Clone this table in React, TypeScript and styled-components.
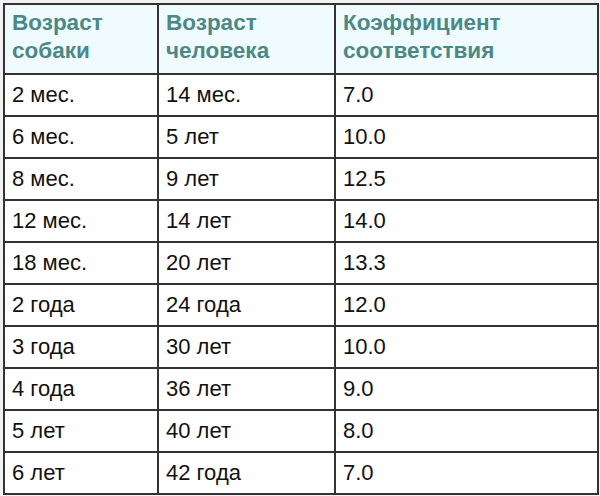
import React from "react";
import styled, { createGlobalStyle } from "styled-components";

const Global = createGlobalStyle`
  html, body { margin: 0; padding: 0; background: #f2f2f2; }
  body { font-family: "Liberation Sans", Arial, sans-serif; }
`;

const Page = styled.div`
  width: 600px;
  height: 496px;
  padding: 3px 3px 0 3px;
  box-sizing: border-box;
  background: #f2f2f2;
`;

const Table = styled.table`
  border-collapse: collapse;
  width: 594px;
  table-layout: fixed;
  background: #ffffff;
  border: 2px solid #333333;
`;

const Col = styled.col<{ $w: number }>`
  width: ${(p) => p.$w}px;
`;

const HeadCell = styled.th`
  background: #f0fbfe;
  color: #4b8886;
  font-weight: bold;
  font-size: 22.5px;
  line-height: 28px;
  text-align: left;
  vertical-align: middle;
  padding: 2px 7px 6px 7px;
  height: 70px;
  box-sizing: border-box;
  border: 2px solid #333333;
`;

const Cell = styled.td`
  color: #111111;
  font-size: 22px;
  text-align: left;
  vertical-align: middle;
  padding: 0 7px;
  height: 42px;
  box-sizing: border-box;
  border: 2px solid #333333;
`;

const rows: [string, string, string][] = [
  ["2 мес.", "14 мес.", "7.0"],
  ["6 мес.", "5 лет", "10.0"],
  ["8 мес.", "9 лет", "12.5"],
  ["12 мес.", "14 лет", "14.0"],
  ["18 мес.", "20 лет", "13.3"],
  ["2 года", "24 года", "12.0"],
  ["3 года", "30 лет", "10.0"],
  ["4 года", "36 лет", "9.0"],
  ["5 лет", "40 лет", "8.0"],
  ["6 лет", "42 года", "7.0"],
];

export default function App() {
  return (
    <>
      <Global />
      <Page>
        <Table>
          <colgroup>
            <Col $w={154} />
            <Col $w={177} />
            <Col $w={263} />
          </colgroup>
          <thead>
            <tr>
              <HeadCell>
                Возраст
                <br />
                собаки
              </HeadCell>
              <HeadCell>
                Возраст
                <br />
                человека
              </HeadCell>
              <HeadCell>
                Коэффициент
                <br />
                соответствия
              </HeadCell>
            </tr>
          </thead>
          <tbody>
            {rows.map((r, i) => (
              <tr key={i}>
                <Cell>{r[0]}</Cell>
                <Cell>{r[1]}</Cell>
                <Cell>{r[2]}</Cell>
              </tr>
            ))}
          </tbody>
        </Table>
      </Page>
    </>
  );
}
